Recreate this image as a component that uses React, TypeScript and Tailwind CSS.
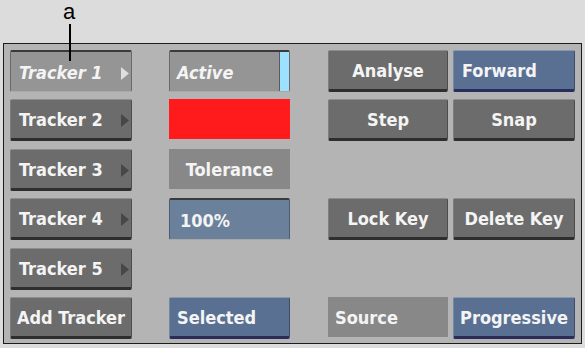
import React from 'react';

const font = "font-['DejaVu_Sans_Condensed','DejaVu_Sans',sans-serif] font-bold text-[18px] leading-none pt-[2px] text-[#f4f4f4]";

const raised =
  'rounded-[2px] border border-t-[#8c8c8c] border-l-[#7e7e7e] border-r-[#4c4c4c] border-b-[3px] border-b-[#2e2e2e] bg-[#6c6c6c]';
const raisedBlue =
  'rounded-[2px] border border-t-[#8597b2] border-l-[#7387a6] border-r-[#3e4c66] border-b-[3px] border-b-[#2a2c5a] bg-[#5a7093]';
const pressed =
  'rounded-[2px] border border-t-2 border-t-[#3a3a3a] border-l-[#6a6a6a] border-r-[#6a6a6a] border-b-[#a8a8a8] bg-[#959595]';
const pressedBlue =
  'rounded-[2px] border border-t-2 border-t-[#3a3a3a] border-l-[#4c5c74] border-r-[#4c5c74] border-b-[#a8a8a8] bg-[#6a809b]';
const flat = 'bg-[#888888]';

function Arrow({ light }: { light?: boolean }) {
  return (
    <svg width="8" height="13" viewBox="0 0 8 13" className="shrink-0 mt-[3px]">
      <polygon points="0,0 8,6.5 0,13" fill={light ? '#dedede' : '#474747'} />
    </svg>
  );
}

function TrackerButton({ label, active }: { label: string; active?: boolean }) {
  return (
    <div className={`${active ? pressed : raised} w-[122px] h-full flex items-center pl-[8px] pr-[2px]`}>
      <span className={`${font} flex-1 ${active ? 'italic' : ''}`}>{label}</span>
      <Arrow light={active} />
    </div>
  );
}

function Cell({
  style,
  label,
  align = 'center',
  w,
  ml,
  pl = 'pl-[8px]',
}: {
  style: string;
  label?: string;
  align?: 'center' | 'left';
  w: string;
  ml?: string;
  pl?: string;
}) {
  return (
    <div
      className={`${style} ${w} ${ml ?? ''} h-full flex items-center ${
        align === 'center' ? 'justify-center' : `justify-start ${pl}`
      }`}
    >
      {label && <span className={font}>{label}</span>}
    </div>
  );
}

export default function App() {
  return (
    <div className="relative w-[585px] h-[348px] bg-[#dcdcdc] pt-[43px] px-[3px] overflow-hidden">
      {/* callout label */}
      <div className="absolute left-[63px] top-[0px] h-[24px] font-['Liberation_Sans',Arial,sans-serif] text-[22px] leading-[24px] text-black">
        a
      </div>
      <div className="absolute left-[69px] top-[24px] w-[2px] h-[37px] bg-black" />

      <div className="w-[579px] h-[301px] border border-[#1c1c1c] bg-[#b4b4b4] pt-[6px] pl-[6px]">
        <div className="flex flex-col gap-[7.4px]">
          {/* row 1 */}
          <div className="flex h-[42px]">
            <TrackerButton label="Tracker 1" active />
            <div className={`${pressed} w-[121px] ml-[37px] h-full flex items-stretch`}>
              <span className={`${font} italic flex-1 flex items-center pl-[7px]`}>Active</span>
              <div className="w-[10px] bg-[#9ee0ff] border-l border-l-[#5a5a5a]" />
            </div>
            <Cell style={raised} label="Analyse" w="w-[120px]" ml="ml-[38px]" />
            <Cell style={raisedBlue} label="Forward" align="left" w="w-[122px]" ml="ml-[5px]" />
          </div>

          {/* row 2 */}
          <div className="flex h-[42px]">
            <TrackerButton label="Tracker 2" />
            <div className="w-[121px] ml-[37px] h-[40px] bg-[#ff1b1b]" />
            <Cell style={raised} label="Step" w="w-[120px]" ml="ml-[38px]" />
            <Cell style={raised} label="Snap" w="w-[122px]" ml="ml-[5px]" />
          </div>

          {/* row 3 */}
          <div className="flex h-[42px]">
            <TrackerButton label="Tracker 3" />
            <div className={`${flat} w-[121px] ml-[37px] h-[40px] flex items-center justify-center`}>
              <span className={font}>Tolerance</span>
            </div>
          </div>

          {/* row 4 */}
          <div className="flex h-[42px]">
            <TrackerButton label="Tracker 4" />
            <Cell style={pressedBlue} label="100%" align="left" pl="pl-[10px]" w="w-[121px]" ml="ml-[37px]" />
            <Cell style={raised} label="Lock Key" w="w-[120px]" ml="ml-[38px]" />
            <Cell style={raised} label="Delete Key" w="w-[122px]" ml="ml-[5px]" />
          </div>

          {/* row 5 */}
          <div className="flex h-[42px]">
            <TrackerButton label="Tracker 5" />
          </div>

          {/* row 6 */}
          <div className="flex h-[42px]">
            <Cell style={raised} label="Add Tracker" w="w-[122px]" />
            <Cell style={raisedBlue} label="Selected" align="left" pl="pl-[7px]" w="w-[121px]" ml="ml-[37px]" />
            <div className={`${flat} w-[120px] ml-[38px] h-[40px] flex items-center pl-[7px]`}>
              <span className={font}>Source</span>
            </div>
            <Cell style={raisedBlue} label="Progressive" w="w-[122px]" ml="ml-[5px]" />
          </div>
        </div>
      </div>
    </div>
  );
}
